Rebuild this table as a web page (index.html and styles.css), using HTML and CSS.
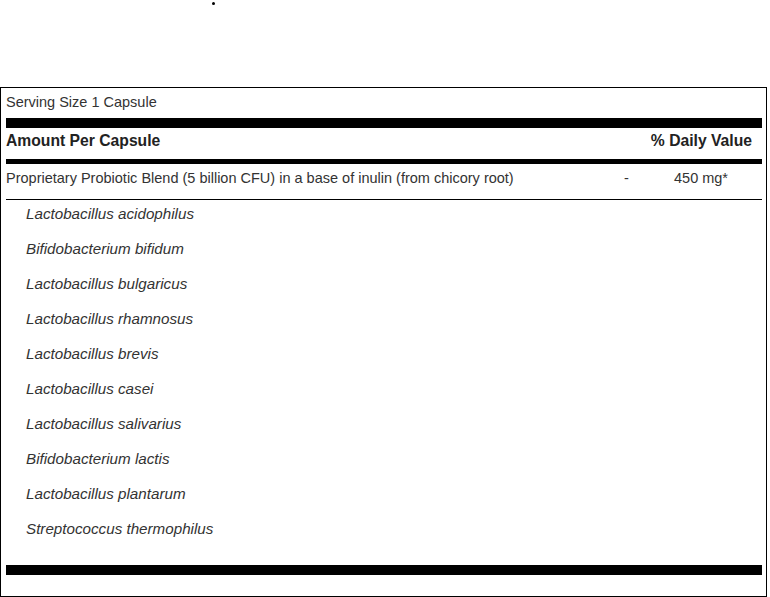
FILE: index.html
```html
<!DOCTYPE html>
<html>
<head>
<meta charset="utf-8">
<link rel="stylesheet" href="styles.css">
</head>
<body>
<div class="top"><span class="dot"></span></div>
<div class="label">
  <div class="serving">Serving Size 1 Capsule</div>
  <div class="bar thick"></div>
  <div class="head">
    <span class="head-name">Amount Per Capsule</span>
    <span class="head-dv">% Daily Value</span>
  </div>
  <div class="bar medium"></div>
  <div class="blend">
    <span class="blend-name">Proprietary Probiotic Blend (5 billion CFU) in a base of inulin (from chicory root)</span>
    <span class="blend-dv">-</span>
    <span class="blend-amt">450 mg*</span>
  </div>
  <div class="bar hair"></div>
  <ul class="strains">
    <li>Lactobacillus acidophilus</li>
    <li>Bifidobacterium bifidum</li>
    <li>Lactobacillus bulgaricus</li>
    <li>Lactobacillus rhamnosus</li>
    <li>Lactobacillus brevis</li>
    <li>Lactobacillus casei</li>
    <li>Lactobacillus salivarius</li>
    <li>Bifidobacterium lactis</li>
    <li>Lactobacillus plantarum</li>
    <li>Streptococcus thermophilus</li>
  </ul>
  <div class="bar thick bottom"></div>
</div>
</body>
</html>
```
FILE: styles.css
```css
html, body {
  margin: 0;
  padding: 0;
  background: #fff;
}
body {
  font-family: "Liberation Sans", Arial, sans-serif;
  font-size: 14.5px;
  color: #333;
}
.top {
  height: 87px;
  box-sizing: border-box;
  padding: 2px 0 0 212px;
}
.dot {
  display: block;
  width: 3px;
  height: 3px;
  border-radius: 50%;
  background: #000;
}
.label {
  width: 767px;
  height: 510px;
  box-sizing: border-box;
  border: 1px solid #000;
  padding: 0 4px 0 5px;
}
.serving {
  height: 30px;
  line-height: 28px;
}
.bar {
  background: #000;
}
.thick {
  height: 10px;
}
.medium {
  height: 5px;
}
.hair {
  height: 1px;
}
.head {
  display: flex;
  justify-content: space-between;
  height: 31px;
  line-height: 26px;
  font-size: 15.7px;
  font-weight: bold;
  color: #222;
}
.head-dv {
  padding-right: 10px;
}
.blend {
  display: flex;
  height: 35px;
  line-height: 28px;
}
.blend-name {
  flex: 1;
}
.blend-dv {
  width: 50px;
  text-align: left;
}
.blend-amt {
  width: 88px;
}
.strains {
  list-style: none;
  margin: 0;
  padding: 0 0 0 20px;
  font-style: italic;
  font-size: 15.2px;
}
.strains li {
  height: 35px;
  line-height: 28px;
}
.bottom {
  margin-top: 15px;
}
```
